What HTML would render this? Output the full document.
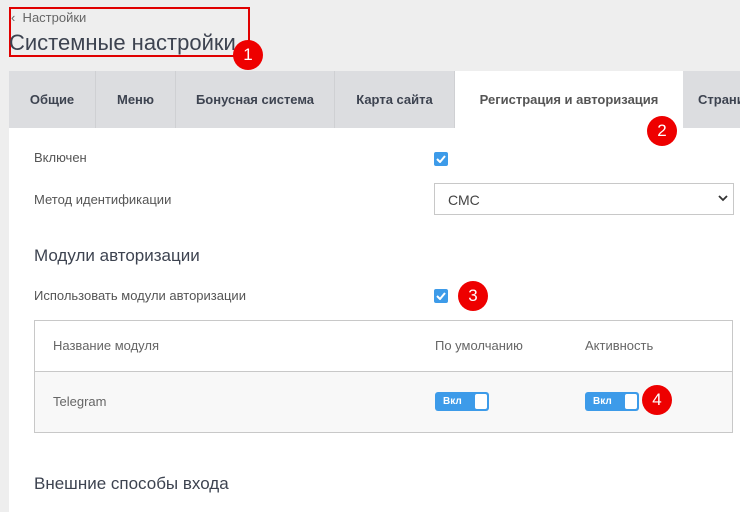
<!DOCTYPE html>
<html><head><meta charset="utf-8"><style>
*{margin:0;padding:0;box-sizing:border-box}
body{width:740px;height:512px;overflow:hidden;background:#eeeeee;font-family:"Liberation Sans",sans-serif;position:relative;color:#555}
.abs{position:absolute}
.tab{position:absolute;top:71px;height:57px;background:#dcdde0;border-right:1px solid #cfd0d3;font-size:13px;font-weight:bold;color:#3d4350;display:flex;align-items:center;justify-content:center}
.content{position:absolute;left:9px;top:128px;width:731px;height:384px;background:#fff}
.lbl{position:absolute;font-size:13px;color:#555}
.cb{position:absolute;width:14px;height:14px;background:#3d9be9;border-radius:2px}
.cb svg{position:absolute;left:2px;top:3px}
.badge{position:absolute;width:30px;height:30px;border-radius:50%;background:#ee0000;color:#fff;font-size:17px;display:flex;align-items:center;justify-content:center}
.tg{position:absolute;width:54px;height:19px;background:#3d9be9;border-radius:3px;color:#fff;font-size:10px;font-weight:bold}
.tg span{position:absolute;left:8px;top:4px}
.tg i{position:absolute;right:2px;top:2px;width:12px;height:15px;background:#fff;border-radius:2px}
</style></head><body>
<div class="abs" style="left:9px;top:7px;width:241px;height:50px;border:2px solid #e00000"></div>
<div class="abs" style="left:11px;top:10px;font-size:13px;color:#666">‹&nbsp; Настройки</div>
<div class="abs" style="left:9px;top:30px;font-size:22px;color:#3d4350">Системные настройки</div>
<div class="badge" style="left:233px;top:40px">1</div>
<div class="tab" style="left:9px;width:87px">Общие</div>
<div class="tab" style="left:96px;width:80px">Меню</div>
<div class="tab" style="left:176px;width:159px">Бонусная система</div>
<div class="tab" style="left:335px;width:120px">Карта сайта</div>
<div class="tab" style="left:455px;width:228px;background:#fff;border:none;color:#555;top:71px">Регистрация и авторизация</div>
<div class="tab" style="left:683px;width:80px;justify-content:flex-start;padding-left:15px">Страницы</div>
<div class="content"></div>
<div class="badge" style="left:647px;top:116px">2</div>
<div class="lbl" style="left:34px;top:150px">Включен</div>
<div class="cb" style="left:434px;top:152px"><svg width="10" height="8"><path d="M1 4l3 3 5-6" stroke="#fff" stroke-width="2" fill="none"/></svg></div>
<div class="lbl" style="left:34px;top:192px">Метод идентификации</div>
<div class="abs" style="left:434px;top:183px;width:300px;height:32px;border:1px solid #c8c8c8;font-size:14px;color:#444;padding:8px 0 0 13px">СМС</div>
<svg class="abs" style="left:718px;top:195px" width="10" height="7"><path d="M1 1l4 4 4-4" stroke="#333" stroke-width="1.8" fill="none"/></svg>
<div class="abs" style="left:34px;top:246px;font-size:17px;color:#3d4350">Модули авторизации</div>
<div class="lbl" style="left:34px;top:288px">Использовать модули авторизации</div>
<div class="cb" style="left:434px;top:289px"><svg width="10" height="8"><path d="M1 4l3 3 5-6" stroke="#fff" stroke-width="2" fill="none"/></svg></div>
<div class="badge" style="left:458px;top:281px">3</div>
<div class="abs" style="left:34px;top:320px;width:699px;height:113px;border:1px solid #c8c8c8;background:#fff"></div>
<div class="abs" style="left:35px;top:371px;width:697px;height:61px;background:#f8f8f8;border-top:1px solid #c8c8c8"></div>
<div class="lbl" style="left:53px;top:338px;color:#666">Название модуля</div>
<div class="lbl" style="left:435px;top:338px;color:#666">По умолчанию</div>
<div class="lbl" style="left:585px;top:338px;color:#666">Активность</div>
<div class="lbl" style="left:53px;top:394px;color:#666">Telegram</div>
<div class="tg" style="left:435px;top:392px"><span>Вкл</span><i></i></div>
<div class="tg" style="left:585px;top:392px"><span>Вкл</span><i></i></div>
<div class="badge" style="left:642px;top:385px">4</div>
<div class="abs" style="left:34px;top:474px;font-size:17px;color:#3d4350">Внешние способы входа</div>
</body></html>
